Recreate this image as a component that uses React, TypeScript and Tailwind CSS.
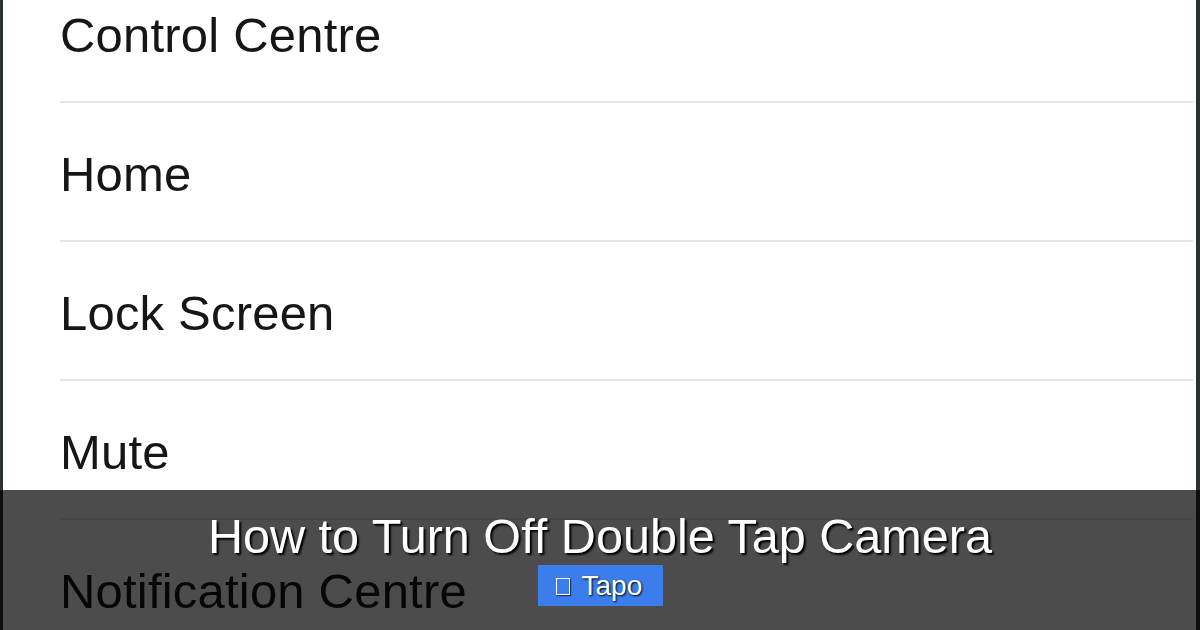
import React from "react";

const items = ["Control Centre", "Home", "Lock Screen", "Mute", "Notification Centre"];

export default function App() {
  return (
    <div
      className="relative w-[1200px] h-[630px] overflow-hidden bg-white flex"
      style={{ fontFamily: '"Liberation Sans", Arial, sans-serif' }}
    >
      <div className="w-[3px] shrink-0 bg-[#2c3134]" />
      <div className="flex-1 flex flex-col mt-[-36px] pl-[57px] pr-[3px]">
        {items.map((t) => (
          <div
            key={t}
            className="h-[139px] shrink-0 border-b-[2px] border-[#e6e6e6] pt-[47px] text-[49px] leading-[49px] tracking-[0.2px] text-[#161616]"
          >
            {t}
          </div>
        ))}
      </div>
      <div className="w-[4px] shrink-0 bg-[#2c3134]" />

      <div className="absolute left-0 right-0 bottom-0 h-[140px] bg-black/70 flex flex-col items-center pt-[22px]">
        <div className="text-[48.6px] leading-[49px] text-white [text-shadow:2px_2px_2px_#000]">
          How to Turn Off Double Tap Camera
        </div>
        <div className="mt-[4px] h-[41px] w-[125px] bg-[#3b7deb] flex items-center pl-[18px] gap-[12px] text-white text-[28px] leading-[28px] [text-shadow:1px_1px_2px_#000]">
          <span className="inline-block w-[14px] h-[17px] border border-white shadow-[1px_1px_1px_rgba(0,0,0,0.6)] mt-[2px]" />
          <span>Tapo</span>
        </div>
      </div>
    </div>
  );
}
